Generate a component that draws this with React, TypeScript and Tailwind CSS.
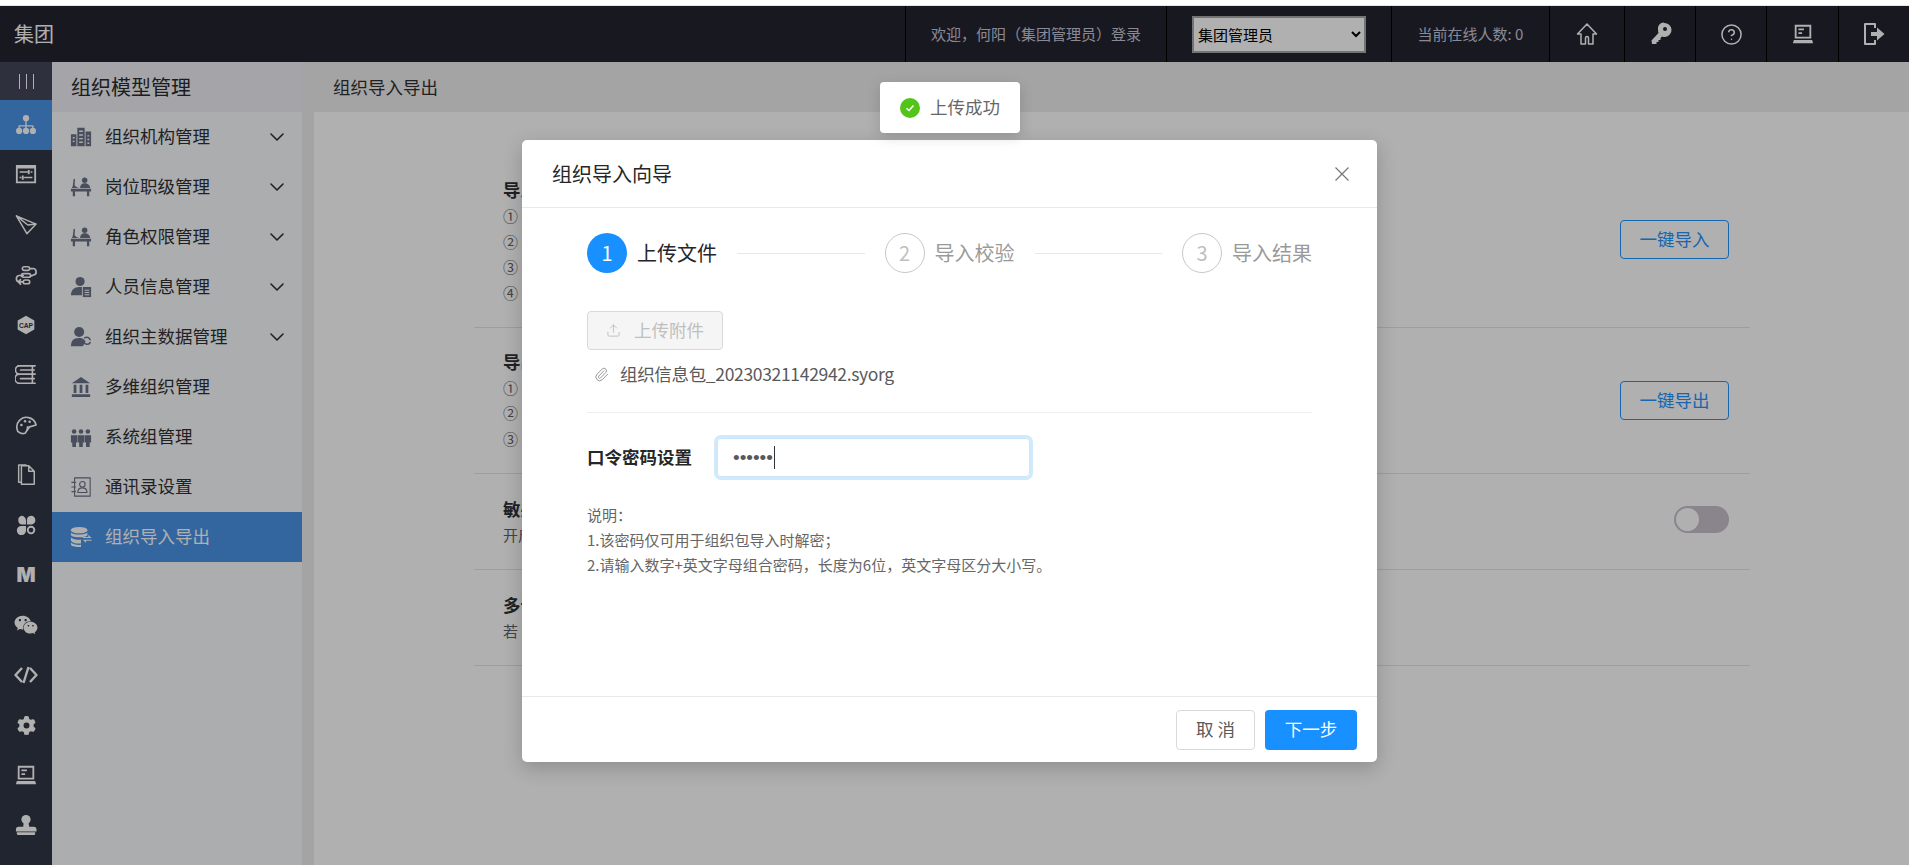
import { ChevronDown, CircleHelp, Paperclip, Upload } from "lucide-react"
import { FaWeixin } from "react-icons/fa"
import { FaGear } from "react-icons/fa6"
import type { ReactNode } from "react"

const Svg = ({ size = 22, children }: { size?: number; children: ReactNode }) => (
  <svg width={size} height={size} viewBox="0 0 24 24" fill="currentColor" stroke="none">
    {children}
  </svg>
)
const line = { fill: "none", stroke: "currentColor", strokeWidth: 2, strokeLinejoin: "round", strokeLinecap: "round" } as const

const OrgIcon = () => (
  <Svg>
    <circle cx="12" cy="4.5" r="3.4" />
    <path {...line} strokeWidth={1.5} d="M12 8v5M4.5 16v-3h15v3M12 13v3" />
    <circle cx="4.5" cy="18.5" r="3.4" />
    <circle cx="12" cy="18.5" r="3.4" />
    <circle cx="19.5" cy="18.5" r="3.4" />
  </Svg>
)
const SlidersBox = () => (
  <Svg>
    <path d="M1 1h22v20H1zM3 5v14h18V5z" fillRule="evenodd" />
    <path d="M5 8h9v1.6H5zM17 8h2v1.6h-2zM14 6.5h2v4.6h-2zM5 14h2v1.6H5zM10 14h9v1.6h-9zM7.5 12.5h2v4.6h-2z" />
  </Svg>
)
const PlaneIcon = () => (
  <Svg>
    <path {...line} strokeWidth={1.6} d="M1.500 2 23 11 13 21.500zM1.500 2 14 12 23 11" />
  </Svg>
)
const FlowIcon = () => (
  <Svg>
    <path {...line} strokeWidth={1.8} d="M10 3h4a2 2 0 0 1 0 4h-4a2 2 0 0 1 0-4zM9 10.500h6a2 2 0 0 1 0 4H9a2 2 0 0 1 0-4zM11 17.500h3a2 2 0 0 1 0 4h-3a2 2 0 0 1 0-4zM17 5h2a3.500 3.500 0 0 1 1 7l-2 1M9 12.500H5a3.500 3.500 0 0 0 0 7h4M6 17l-2.500 2.500L6 22" />
  </Svg>
)
const CapIcon = () => (
  <svg width="20" height="20" viewBox="0 0 24 24">
    <polygon points="12,1 22,6.500 22,17.500 12,23 2,17.500 2,6.500" fill="currentColor" />
    <text x="12" y="15" textAnchor="middle" fontSize="8" fontWeight="700" fill="#313644" fontFamily="'Liberation Sans', sans-serif">
      CAP
    </text>
  </svg>
)
const StackIcon = () => (
  <Svg>
    <path {...line} strokeWidth={1.8} d="M3 2h19M2 11h20M3 21h19M5 2a4.500 4.500 0 0 0 0 9M5 11a5 5 0 0 0 0 10M19 2v9M19 11v10M6 6.500h15M6 16h15" />
  </Svg>
)
const GaugeIcon = () => (
  <Svg>
    <path {...line} strokeWidth={1.8} d="M3 19C-1 9 8 2 15 4c4 1 7 4 8 8l-7 2-5 7c-3 1-6 0-8-2z" />
    <circle cx="7" cy="12" r="1.400" />
    <circle cx="11" cy="8" r="1.400" />
    <circle cx="16" cy="8.500" r="1.400" />
    <path d="M13 13l3 1-4 6z" />
  </Svg>
)
const FilesIcon = () => (
  <Svg>
    <path {...line} strokeWidth={1.6} d="M7 2h8l6 6v14H7zM15 2v6h6M7 20H4V1h8" />
  </Svg>
)
const CloverIcon = () => (
  <Svg>
    <path d="M7 2a5 5 0 0 1 5 5v4.500H7A5 5 0 0 1 7 2zM17.500 2a4.700 4.700 0 0 1 0 9.500H13V7a5 5 0 0 1 4.500-5zM7 13h5v4.500A5 5 0 1 1 7 13z" />
    <circle cx="17.500" cy="17.500" r="3.600" fill="none" stroke="currentColor" strokeWidth="2" />
  </Svg>
)
const MLetter = () => <span className="text-[20px] leading-none font-black font-['Inter',sans-serif]">M</span>
const CodeIcon = () => (
  <Svg size={24}>
    <path {...line} strokeWidth={2.4} strokeLinecap="butt" d="M8 5 1.500 12 8 19M16 5l6.500 7-6.500 7M14.500 4 9.500 20" />
  </Svg>
)
const LaptopIcon = ({ size = 22 }: { size?: number }) => (
  <Svg size={size}>
    <path d="M3 2h18v15H3zM5 4v11h14V4z" fillRule="evenodd" />
    <path d="M7 6h6v2H7zM7 10h4v2H7zM2 18.500h20l1 3.500H1z" />
  </Svg>
)
const StampIcon = () => (
  <Svg>
    <circle cx="12" cy="6" r="5" />
    <path d="M9.500 9h5l1 5h5c2 0 3 1.500 3 3v2H1v-2c0-1.500 1-3 3-3h5zM2 20h20v1.500a1.500 1.500 0 0 1-1.500 1.500h-17A1.500 1.500 0 0 1 2 21.500z" />
  </Svg>
)
const HomeIcon = () => (
  <Svg size={24}>
    <path {...line} strokeWidth={1.5} d="M12 2 2.500 12H6v10h4.500v-6a1.500 1.500 0 0 1 3 0v6H18V12h3.500z" />
  </Svg>
)
const KeyIcon = () => (
  <Svg size={24}>
    <path d="M16 1a7 7 0 0 1 1 14c-1 0-2 0-3-.5l-1.500 1.500V18h-2v2H8.500v2H4l-.5-3.500 7-7.500c-.4-1-.5-2-.5-3a6 6 0 0 1 6-7.500zM17 5a2 2 0 1 0 0 4 2 2 0 0 0 0-4z" fillRule="evenodd" />
  </Svg>
)
const ExitIcon = () => (
  <Svg size={24}>
    <path {...line} strokeWidth={2} strokeLinecap="butt" d="M13 6V2H3v20h10v-4" />
    <path d="M9 10h6V5.500l7.500 6.500-7.500 6.500V14H9z" />
  </Svg>
)

const BuildingIcon = () => (
  <Svg>
    <path d="M8 2h8v20H8zM1 9h6v13H1zM17 6h6v16h-6z" />
    <path d="M10 5h4v1.500h-4zM10 9h4v1.500h-4zM10 13h4v1.500h-4zM10 17h4v1.500h-4zM3 12h2v1.500H3zM3 16h2v1.500H3zM19 10h2v1.500h-2zM19 14h2v1.500h-2zM19 18h2v1.500h-2z" fill="#f9fbfe" />
  </Svg>
)
const DeskIcon = () => (
  <Svg>
    <circle cx="16" cy="4.500" r="3" />
    <path d="M11 13c0-3 2-5 5-5s6 2 6 5zM1 14h22v3H1zM3 17h2.500v5H3zM18.500 17H21v5h-2.500zM2 13l2-4 3 3 3 1H2zM3 11l1-8 1.500.5L5 10z" />
  </Svg>
)
const PersonDocIcon = () => (
  <Svg>
    <circle cx="11" cy="6" r="5" />
    <path d="M1 21c0-6 4-9 9-9h3v9z" />
    <path d="M14 12h9v11h-9z" />
    <path d="M16 15h5v1h-5zM16 17.500h5v1h-5zM16 20h5v1h-5z" fill="#f9fbfe" />
  </Svg>
)
const PersonSyncIcon = () => (
  <Svg>
    <circle cx="10" cy="6.500" r="5.500" />
    <path d="M1 22c0-6 3-9 8-9h2c3 0 5 2 6 4l-3 5z" />
    <path {...line} strokeWidth={1.6} d="M16 13a4 4 0 0 1 6 2M22 18a4 4 0 0 1-6 1" />
  </Svg>
)
const BankIcon = () => (
  <Svg>
    <path d="M12 1 22 8H2zM4 9.500h3v9H4zM10.500 9.500h3v9h-3zM17 9.500h3v9h-3zM2 20h20v3H2z" />
  </Svg>
)
const TeamIcon = () => (
  <Svg>
    <circle cx="4.500" cy="6" r="2.500" />
    <circle cx="12" cy="6" r="2.500" />
    <circle cx="19.500" cy="6" r="2.500" />
    <path d="M1 10h7v8H6.500v5h-4v-5H1zM8.500 10h7v8H14v5h-4v-5H8.500zM16 10h7v8h-1.500v5h-4v-5H16z" />
  </Svg>
)
const ContactIcon = () => (
  <Svg>
    <path {...line} strokeWidth={1.2} d="M5 2h17v20H5zM2 7h4M2 12h4M2 17h4" />
    <circle {...line} strokeWidth={1.2} cx="13.500" cy="9" r="3" />
    <path {...line} strokeWidth={1.2} d="M8.500 18c0-3 2-5 5-5s5 2 5 5z" />
  </Svg>
)
const DbSwapIcon = () => (
  <Svg>
    <ellipse cx="10" cy="4.500" rx="9" ry="3.500" />
    <path d="M1 7c2 3 16 3 18 0v3c-2 3-16 3-18 0zM1 12.500c2 2 8 3 11 2.500v4c-4 .500-9 0-11-3zM1 18c2 2 7 3 11 2.500V23H9c-4 0-8-1-8-3z" />
    <path d="M14 12h6V9.500l3.500 3.500H14zM23.500 16h-6v2.500L14 15h9.500z" />
  </Svg>
)

const railIcons = [
  OrgIcon, SlidersBox, PlaneIcon, FlowIcon, CapIcon, StackIcon, GaugeIcon, FilesIcon,
  CloverIcon, MLetter, () => <FaWeixin size={24} />, CodeIcon, () => <FaGear size={19} />, LaptopIcon, StampIcon,
]

const menus = [
  { label: "组织机构管理", Icon: BuildingIcon, arrow: true },
  { label: "岗位职级管理", Icon: DeskIcon, arrow: true },
  { label: "角色权限管理", Icon: DeskIcon, arrow: true },
  { label: "人员信息管理", Icon: PersonDocIcon, arrow: true },
  { label: "组织主数据管理", Icon: PersonSyncIcon, arrow: true },
  { label: "多维组织管理", Icon: BankIcon },
  { label: "系统组管理", Icon: TeamIcon },
  { label: "通讯录设置", Icon: ContactIcon },
  { label: "组织导入导出", Icon: DbSwapIcon, active: true },
]

const Rail = () => (
  <div className="w-[52px] shrink-0 bg-[#313644] flex flex-col text-white">
    <div className="h-[38px] bg-[#43465a] flex items-center justify-center gap-[6px]">
      <span className="w-px h-[15px] bg-white" />
      <span className="w-px h-[15px] bg-white" />
      <span className="w-px h-[15px] bg-white" />
    </div>
    {railIcons.map((Icon, i) => (
      <div key={i} className={`h-[50px] flex items-center justify-center ${i === 0 ? "bg-[#4a93e7]" : ""}`}>
        <Icon />
      </div>
    ))}
  </div>
)

const Sidebar = () => (
  <div className="w-[250px] shrink-0 bg-[#f9fbfe] flex flex-col">
    <div className="h-[50px] bg-[#eff0f5] pl-[19px] flex items-center text-[20px] text-[#2a2a2a]">组织模型管理</div>
    {menus.map(({ label, Icon, arrow, active }) => (
      <div key={label} className={`h-[50px] flex items-center pl-[18px] pr-[13px] ${active ? "bg-[#4a93e7] text-white" : "text-[#303133]"}`}>
        <span className={active ? "text-white" : "text-[#6b7287]"}>
          <Icon />
        </span>
        <span className="ml-[13px] -mt-px text-[17.5px] flex-1">{label}</span>
        {arrow && <ChevronDown size={24} strokeWidth={1.6} className="text-[#303133]" />}
      </div>
    ))}
  </div>
)

const Row = ({ title, lines, children, mt, pt = "pt-[21px]" }: { title: string; lines: string[]; children?: ReactNode; mt?: string; pt?: string }) => (
  <div className={`flex justify-between items-start border-b border-[#e4e4e4] pl-[29px] pr-[21px] pb-[21.5px] ${pt}`}>
    <div>
      <div className="text-[17.5px] leading-[26px] font-bold text-[#303133]">{title}</div>
      {lines.map((l) => (
        <div key={l} className="text-[15px] leading-[25.500px] text-[#606266]">
          {l}
        </div>
      ))}
    </div>
    {children && <div className={mt}>{children}</div>}
  </div>
)

const OutlineButton = ({ children }: { children: string }) => (
  <button className="w-[109px] h-[39px] rounded-[4px] border border-[#2594ff] text-[#2594ff] text-[17.5px]">{children}</button>
)

const Content = () => (
  <div className="flex-1 ml-[12px] bg-white flex flex-col">
    <div className="h-[50px] shrink-0 bg-[#f0eeef] pl-[19px] flex items-center text-[17.5px] text-[#303133]">组织导入导出</div>
    <div className="pl-[160px] pr-[159px] pt-[44px]">
      <Row title="导入组织包" mt="mt-[43px]" lines={["① 导入说明", "② 导入说明", "③ 导入说明", "④ 导入说明"]}>
        <OutlineButton>一键导入</OutlineButton>
      </Row>
      <Row title="导出组织包" mt="mt-[32px]" lines={["① 导出说明", "② 导出说明", "③ 导出说明"]}>
        <OutlineButton>一键导出</OutlineButton>
      </Row>
      <Row title="敏感字段" mt="mt-[10px]" pt="pt-[22px]" lines={["开启"]}>
        <div className="w-[55px] h-[27px] rounded-full bg-[#c8bfcb] p-[2px]">
          <div className="w-[23px] h-[23px] rounded-full bg-white" />
        </div>
      </Row>
      <Row title="多语言" pt="pt-[22px]" lines={["若"]} />
    </div>
  </div>
)

const headerCell = "h-full flex items-center justify-center border-l border-black"

const Header = () => (
  <div className="h-[56px] shrink-0 bg-[#232331] flex items-center text-white">
    <div className="pl-[14px] text-[20px] flex-1">集团</div>
    <div className={`${headerCell} w-[261px] text-[15px] text-[#c8c8da]`}>欢迎，何阳（集团管理员）登录</div>
    <div className={`${headerCell} w-[225px]`}>
      <select className="w-[174px] h-[37px] bg-white border-2 border-[#a8a8a8] text-black text-[15px]" defaultValue="集团管理员">
        <option>集团管理员</option>
      </select>
    </div>
    <div className={`${headerCell} w-[158px] text-[15px] text-[#c8c8da]`}>当前在线人数: 0</div>
    <div className={`${headerCell} w-[75px]`}>
      <HomeIcon />
    </div>
    <div className={`${headerCell} w-[71px]`}>
      <KeyIcon />
    </div>
    <div className={`${headerCell} w-[71px]`}>
      <CircleHelp size={23} strokeWidth={1.6} />
    </div>
    <div className={`${headerCell} w-[72px]`}>
      <LaptopIcon />
    </div>
    <div className={`${headerCell} w-[71px]`}>
      <ExitIcon />
    </div>
  </div>
)

const Step = ({ n, label, active }: { n: number; label: string; active?: boolean }) => (
  <div className="flex items-center shrink-0">
    <span
      className={`w-[40px] h-[40px] rounded-full flex items-center justify-center text-[20px] ${
        active ? "bg-[#1890ff] text-white" : "border border-[#c8c8c8] text-[#bfbfbf]"
      }`}
    >
      {n}
    </span>
    <span className={`ml-[10px] text-[20px] ${active ? "text-[#262626]" : "text-[#9a9a9a]"}`}>{label}</span>
  </div>
)

const Wizard = () => (
  <div className="absolute left-[522px] top-[140px] w-[855px] h-[622px] bg-white rounded-[5px] shadow-[0_6px_20px_rgba(0,0,0,0.2)] flex flex-col">
    <div className="h-[68px] shrink-0 border-b border-[#e8e8e8] pl-[30px] pr-[28px] flex items-center justify-between">
      <span className="text-[20px] text-[#262626]">组织导入向导</span>
      <svg width="14" height="14" viewBox="0 0 14 14" stroke="#777" strokeWidth="1.200">
        <path d="M0.500 0.500 13.500 13.500M13.500 0.500 0.500 13.500" />
      </svg>
    </div>
    <div className="flex-1 px-[65px] pt-[25px]">
      <div className="flex items-center">
        <Step n={1} label="上传文件" active />
        <span className="flex-1 h-px bg-[#e8e8e8] mx-[20px]" />
        <Step n={2} label="导入校验" />
        <span className="flex-1 h-px bg-[#e8e8e8] mx-[20px]" />
        <Step n={3} label="导入结果" />
      </div>
      <button className="mt-[38px] w-[136px] h-[39px] rounded-[4px] border border-[#d9d9d9] bg-[#f5f5f5] text-[#bfbfbf] text-[17.5px] flex items-center justify-center gap-[13px]">
        <Upload size={15} strokeWidth={1.5} />
        上传附件
      </button>
      <div className="mt-[12px] h-[24px] flex items-center pl-[7px] text-[17.5px] tracking-[-0.33px] text-[#595959] gap-[11px]">
        <Paperclip size={15} strokeWidth={1.6} className="text-[#999]" />
        组织信息包_20230321142942.syorg
      </div>
      <div className="mt-[26px] border-t border-[#eeeeee]" />
      <div className="mt-[25px] flex items-center">
        <span className="w-[130px] text-[17.5px] font-bold text-[#262626]">口令密码设置</span>
        <div className="relative">
          <input
            type="password"
            readOnly
            value="123456"
            className="w-[313px] h-[39px] rounded-[4px] border border-[#c9e6fb] ring-3 ring-[#d0eafc] outline-none pl-[15px] text-[19px] text-[#595959] font-['Liberation_Sans',sans-serif]"
          />
          <span className="absolute left-[57px] top-[8px] w-px h-[23px] bg-[#333]" />
        </div>
      </div>
      <div className="mt-[25px] text-[15px] leading-[25px] text-[#666]">
        <div>说明：</div>
        <div>1.该密码仅可用于组织包导入时解密；</div>
        <div>2.请输入数字+英文字母组合密码，长度为6位，英文字母区分大小写。</div>
      </div>
    </div>
    <div className="h-[66px] shrink-0 border-t border-[#e8e8e8] flex items-center justify-end pr-[20px] gap-[10px]">
      <button className="w-[79px] h-[40px] rounded-[4px] border border-[#d9d9d9] bg-white text-[17.5px] text-[#595959]">取 消</button>
      <button className="w-[92px] h-[40px] rounded-[4px] bg-[#1890ff] text-white text-[17.5px]">下一步</button>
    </div>
  </div>
)

const Toast = () => (
  <div className="absolute left-[880px] top-[82px] w-[140px] h-[51px] bg-white rounded-[4px] shadow-[0_4px_14px_rgba(0,0,0,0.15)] flex items-center pl-[20px] gap-[10px] text-[17.5px] text-[#666]">
    <span className="w-[20px] h-[20px] rounded-full bg-[#52c41a] flex items-center justify-center">
      <svg width="10" height="10" viewBox="0 0 10 10" fill="none" stroke="#fff" strokeWidth="1.500">
        <path d="M1.500 5.200 4 7.500 8.500 2.500" />
      </svg>
    </span>
    上传成功
  </div>
)

export default function App() {
  return (
    <div className="relative h-screen overflow-hidden bg-white flex flex-col font-['Noto_Sans_CJK_SC','Noto_Sans',sans-serif]">
      <div className="h-[6px] shrink-0 bg-white border-b border-[#e6e6e6]" />
      <div className="relative flex-1 flex flex-col min-h-0">
        <Header />
        <div className="flex-1 flex min-h-0">
          <Rail />
          <Sidebar />
          <div className="flex-1 flex bg-[#eeeeee]">
            <Content />
          </div>
        </div>
        <div className="absolute inset-0 bg-[rgba(0,0,0,0.31)]" />
      </div>
      <Wizard />
      <Toast />
    </div>
  )
}
